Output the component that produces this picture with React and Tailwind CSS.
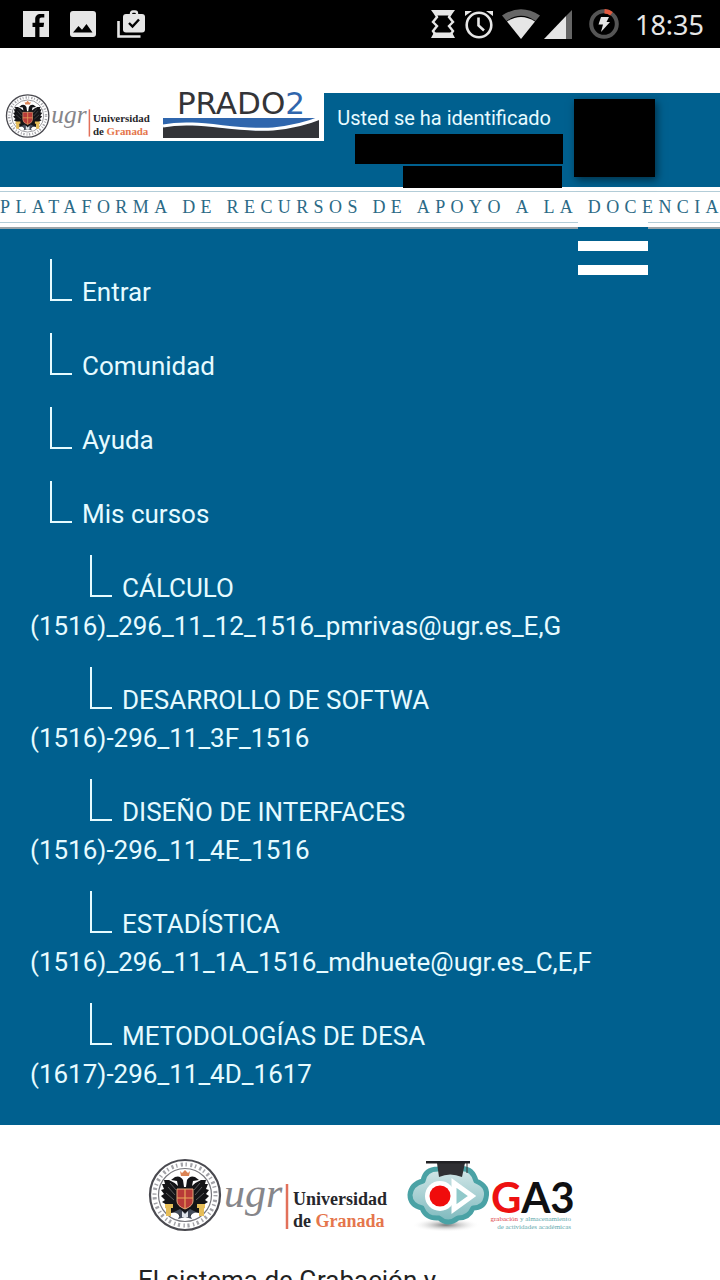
import React from 'react';

const menu = ['Entrar', 'Comunidad', 'Ayuda', 'Mis cursos'];

const courses = [
  ['CÁLCULO', '(1516)_296_11_12_1516_pmrivas@ugr.es_E,G'],
  ['DESARROLLO DE SOFTWA', '(1516)-296_11_3F_1516'],
  ['DISEÑO DE INTERFACES', '(1516)-296_11_4E_1516'],
  ['ESTADÍSTICA', '(1516)_296_11_1A_1516_mdhuete@ugr.es_C,E,F'],
  ['METODOLOGÍAS DE DESA', '(1617)-296_11_4D_1617'],
];

const motto = 'PLATAFORMA DE RECURSOS DE APOYO A LA DOCENCIA'.split(' ');

function StatusBar() {
  return (
    <div className="flex h-12 shrink-0 items-center justify-between bg-black pr-4 pl-[23px] text-[#e6e6e6]">
      <div className="flex items-center gap-[21px]">
        <svg className="size-[26px]" viewBox="0 0 26 26" fill="currentColor" aria-hidden="true">
          <path d="M0 0h26v26h-9.500V16h4l.6-4.300h-4.600V8.800c0-1.500.6-2.200 2.200-2.200h2.600V3h-3.500c-3.800 0-5.600 2-5.600 5.400v3.300H9.500V16h2.700v10H0z" />
        </svg>
        <svg className="size-[26px]" viewBox="0 0 26 26" aria-hidden="true">
          <rect width="26" height="26" rx="3" fill="currentColor" />
          <path d="M3 21.500 8.500 15l3.500 3.800L16.500 13l6 8.500z" fill="#000" />
        </svg>
        <svg className="h-7 w-[29px]" viewBox="0 0 29 28" aria-hidden="true">
          <path d="M1.500 11v15.500h22" fill="none" stroke="currentColor" strokeWidth="2.600" />
          <path d="M14 5V3.500Q14 1.500 16 1.500h2Q20 1.500 20 3.500V5" fill="none" stroke="currentColor" strokeWidth="2.400" />
          <rect x="6" y="4" width="22" height="18.500" rx="3" fill="currentColor" />
          <path d="m12 13 3.500 3.500L22 9.500" fill="none" stroke="#000" strokeWidth="2.400" />
        </svg>
      </div>
      <div className="flex items-center">
        <svg className="mr-[9px] h-7 w-[25px]" viewBox="0 0 25 28" aria-hidden="true">
          <path d="M0 0h24l-4 5.500H4zM0 28h24l-3-5.500H3z" fill="currentColor" />
          <path d="M4.500 4 6 7 2 12l4 4-4 5 2 3M19.500 4 18 7 22 12l-4 4 4 5-2 3" fill="none" stroke="currentColor" strokeWidth="2.400" />
        </svg>
        <svg className="mr-[9px] h-[30px] w-7" viewBox="0 0 28 30" fill="none" stroke="currentColor" strokeWidth="2.600" aria-hidden="true">
          <circle cx="14" cy="16" r="12.300" />
          <path d="M13.500 8.500v8l5.500 5" />
          <path d="M0 7V2h7zM28 7V2h-7z" fill="currentColor" stroke="none" />
        </svg>
        <svg className="mr-1 h-[30px] w-[38px]" viewBox="0 0 38 30" aria-hidden="true">
          <path d="M0 6.500Q19-6 38 6.500L33.500 12Q19 1.500 4.500 12z" fill="#666" />
          <path d="M5 12.500Q19 3.500 33 12.500L19 30z" fill="currentColor" />
        </svg>
        <svg className="mr-[17px] h-[29px] w-7" viewBox="0 0 28 29" aria-hidden="true">
          <path d="M28 0v29h-6V6z" fill="#666" />
          <path d="M22 6v23H0z" fill="currentColor" />
        </svg>
        <svg className="mr-4 size-[30px]" viewBox="0 0 30 30" aria-hidden="true">
          <circle cx="15" cy="15" r="12.800" fill="none" stroke="#555" strokeWidth="4" />
          <path d="M15.500 2.200A12.800 12.800 0 0 1 22.500 4.700" fill="none" stroke="#e2583e" strokeWidth="4.400" />
          <path d="M12 8h8l-2.500 5H21l-9 10 2-7.500H9.500z" fill="currentColor" />
        </svg>
        <time className="font-['Noto_Sans',sans-serif] text-[27px] leading-none">18:35</time>
      </div>
    </div>
  );
}

function UgrLogo({ className }) {
  return (
    <svg className={className} viewBox="0 0 242 76" role="img" aria-label="Universidad de Granada">
      <circle cx="37" cy="38" r="35" fill="#fff" stroke="#4a4a50" strokeWidth="2.200" />
      <circle cx="37" cy="38" r="30.500" fill="none" stroke="#a3a3a8" strokeWidth="4" strokeDasharray="1.400 3.400 2.200 2.600" />
      <circle cx="37" cy="38" r="26.500" fill="#fff" stroke="#77777d" strokeWidth="1.200" />
      <path d="M36 30l-1-7q-3-5-8-3l-4 3 6 1 1 5q-4-4-9-6l-5 0 1 4-3 0 2 5-3 1 3 4-3 2 4 4-3 2 5 3-2 3 6 1 0 4 6-1 3 5 5-3 5 3 3-5 6 1 0-4 6-1-2-3 5-3-3-2 4-4-3-2 3-4-3-1 2-5-3 0 1-4-5 0q-5 2-9 6l1-5 6-1-4-3q-5-2-8 3l-1 7z" fill="#141417" />
      <path d="M20 30l7 8M18 36l8 7M54 30l-7 8M56 36l-8 7M22 26l6 7M52 26l-6 7" stroke="#777" strokeWidth=".7" />
      <path d="M17 47h8v4h-2v8h-5v-8h-1zM49 47h8v4h-1v8h-5v-8h-2z" fill="#e6bd58" />
      <path d="M32 14l2 2 3-3 3 3 2-2-1 5h-8z" fill="#dc8455" />
      <path d="M29 32h16v12q0 5-8 8-8-3-8-8z" fill="#b83a38" stroke="#e2a77b" />
      <path d="M37 32v20M29 41h16" stroke="#e9a75b" strokeWidth="1.200" />
      <path d="m26 55 6-3 5 4 5-4 6 3-6 3 2 4-7-2-7 2 2-4z" fill="#454d5b" />
      <path d="m34 54 3 3 3-3v6h-6z" fill="#dfe4ea" />
      <text x="76" y="50" fontSize="42" fontStyle="italic" fill="#86868a" fontFamily="'Liberation Serif', serif">ugr</text>
      <path d="M139 27v45" stroke="#e2705a" strokeWidth="2.500" />
      <g fontSize="18" fontWeight="700" fontFamily="'Liberation Serif', serif" fill="#26262b">
        <text x="145" y="48">Universidad</text>
        <text x="145" y="70">de <tspan fill="#e5764c">Granada</tspan></text>
      </g>
    </svg>
  );
}

function PradoLogo() {
  return (
    <svg className="h-[46px] w-[157px] overflow-visible" viewBox="0 0 157 46" role="img" aria-label="PRADO2">
      <text x="78" y="21" textAnchor="middle" fontSize="31" fill="#333438" fontFamily="'DejaVu Sans', sans-serif">
        PRADO<tspan fill="#2f66ad">2</tspan>
      </text>
      <path d="M0 25h156v20H0z" fill="#2f66ad" />
      <path d="M0 34C35 27 72 40 110 37 130 35 145 30 156 25V45H0z" fill="#333438" />
      <path d="M0 33C35 26 72 39 110 36 130 34 145 30 157 25" fill="none" stroke="#fff" strokeWidth="3" />
    </svg>
  );
}

function Ga3Logo() {
  return (
    <svg className="h-[76px] w-[168px]" viewBox="0 0 168 76" role="img" aria-label="GA3 grabación y almacenamiento de actividades académicas">
      <defs>
        <radialGradient id="shade">
          <stop offset="0" stopColor="#777" />
          <stop offset="1" stopColor="#fff" stopOpacity="0" />
        </radialGradient>
        <linearGradient id="cloud" x1="0" y1="0" x2="0" y2="1">
          <stop offset="0" stopColor="#d7e9ea" />
          <stop offset="1" stopColor="#7db9bd" />
        </linearGradient>
      </defs>
      <ellipse cx="39" cy="68" rx="34" ry="7" fill="url(#shade)" />
      <path d="M16 24Q18 12 31 12 40 6 50 12 65 9 69 24 82 29 79 41 77 51 66 51 62 61 51 61 41 69 32 61 19 62 15 51 3 48 3 38 4 27 16 24z" fill="url(#cloud)" stroke="#4aa2a5" strokeWidth="5" strokeLinejoin="round" />
      <circle cx="33" cy="39" r="15" fill="#fff" />
      <path d="M47 26 65 39 47 52z" fill="#91c9ca" stroke="#fff" strokeWidth="5" />
      <circle cx="33" cy="39" r="10.500" fill="#f00c0c" />
      <path d="M30 6h28l-3 14q-12-5-23 0z" fill="#303033" />
      <path d="M19 4h44v2.500H19z" fill="#222225" />
      <path d="M60 6v10" stroke="#333" />
      <text x="84" y="56" fontSize="42" fontWeight="700" fontFamily="Lato, sans-serif" fill="#101012"><tspan fill="#ed1111">G</tspan>A3</text>
      <g fontSize="7" textAnchor="end" fontFamily="'Liberation Serif', serif" fill="#5fa9ae">
        <text x="164" y="64"><tspan fill="#dc3c45">grabación</tspan> y almacenamiento</text>
        <text x="164" y="72">de actividades académicas</text>
      </g>
    </svg>
  );
}

function Branch({ nested }) {
  return (
    <span
      aria-hidden="true"
      className={`mr-2.5 inline-block h-[42px] w-[22px] border-b-2 border-l-2 border-[#e6fbff] align-baseline ${nested ? 'ml-[60px]' : 'ml-5'}`}
    />
  );
}

export default function App() {
  return (
    <div className="flex h-screen flex-col overflow-hidden bg-white font-[Roboto,sans-serif]">
      <StatusBar />

      <header className="shrink-0 pt-[45px]">
        <div className="flex h-[94px] items-start justify-between bg-[#00608f] pr-[65px]">
          <div className="flex h-12 items-start gap-2.5 bg-white pr-1 pl-1">
            <UgrLogo className="h-[46px] w-[149px]" />
            <PradoLogo />
          </div>
          <div className="flex gap-[11px] pt-1.5">
            <div className="flex flex-col items-end gap-0.5 pt-[7px]">
              <p className="mb-0.5 pr-3 text-xl leading-6 text-[#e6fbff]">Usted se ha identificado</p>
              <div className="h-[30px] w-52 bg-black" />
              <div className="mr-px h-[22px] w-[159px] bg-black" />
            </div>
            <div className="h-[78px] w-[81px] bg-black shadow-[2px_3px_8px_rgba(0,0,0,0.5)]" />
          </div>
        </div>
        <div className="border-b-2 border-[#9ba3a8] bg-white pt-1 pb-1">
          <p className="flex h-8 items-center justify-between border-y border-[#b3cdd8] font-['Liberation_Serif',serif] text-lg whitespace-nowrap text-[#2c6a86]">
            {motto.map((word, i) => (
              <span key={i} className="tracking-[0.3em] last:-mr-1">{word}</span>
            ))}
          </p>
        </div>
      </header>

      <nav className="relative shrink-0 bg-[#00608f] pt-[19px] pb-[21px] text-[26px] leading-[38px] text-[#e6fbff]">
        <button type="button" aria-label="Menú" className="absolute -top-3 right-[72px] flex w-[70px] flex-col gap-3.5 bg-[#00608f]">
          <span className="h-2.5 w-full bg-white" />
          <span className="h-2.5 w-full bg-white" />
          <span className="h-2.5 w-full bg-white" />
        </button>
        <ul className="px-[30px]">
          {menu.map((label) => (
            <li key={label} className="py-[11px]">
              <a href="#"><Branch />{label}</a>
            </li>
          ))}
          {courses.map(([name, code]) => (
            <li key={name} className="py-[11px]">
              <a href="#"><Branch nested />{name}<br />{code}</a>
            </li>
          ))}
        </ul>
      </nav>

      <footer className="min-h-0 flex-1 overflow-hidden px-[138px] pt-8">
        <div className="flex gap-[17px] pl-2.5">
          <UgrLogo className="h-[76px] w-[242px]" />
          <Ga3Logo />
        </div>
        <p className="mt-7 text-[26px] leading-[38px] text-[#222]">El sistema de Grabación y</p>
      </footer>
    </div>
  );
}
